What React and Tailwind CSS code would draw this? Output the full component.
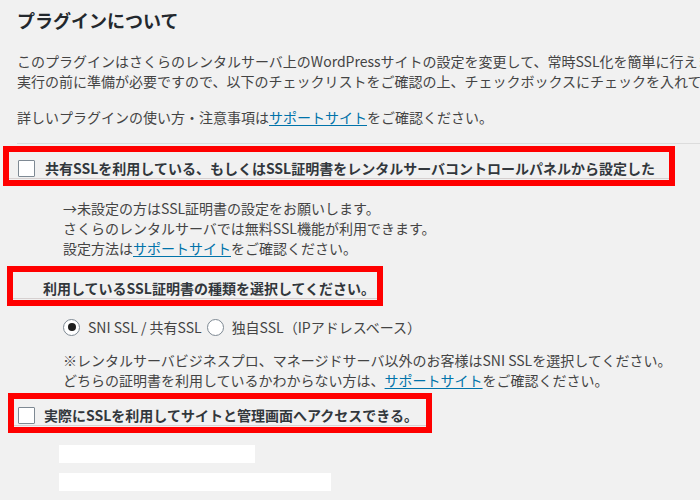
import React from 'react';

const Link = ({ children }) => (
    <span className="text-[#0073aa] underline underline-offset-2">{children}</span>
);

const Checkbox = () => (
    <span className="w-[17px] h-[17px] shrink-0 border border-[#7e8993] bg-white rounded-[1px]" />
);

const Radio = ({ checked }) => (
    <span className="w-[17px] h-[17px] shrink-0 rounded-full border border-[#7e8993] bg-white flex items-center justify-center">
        {checked && <span className="w-[8px] h-[8px] rounded-full bg-[#1e1e1e]" />}
    </span>
);

// red highlight frame drawn over a settings row
const Highlight = ({ className, padLeft, children }) => (
    <div className={`h-[40px] border-[6px] border-[#ff0000] ${className}`}>
        <div className={`h-[27px] border-b border-[#d6d0d0] flex items-center pt-[6px] ${padLeft}`}>
            {children}
        </div>
    </div>
);

export default function App() {
    return (
        <div className="w-[700px] h-[500px] overflow-hidden bg-[#f1f1f1] text-[#444] text-[14px] leading-[20px] whitespace-nowrap font-['Noto_Sans_CJK_JP','Noto_Sans',sans-serif]">
            <h2 className="pt-[8px] pl-[17px] text-[18px] leading-[24px] font-bold text-[#23282d]">
                プラグインについて
            </h2>

            <p className="mt-[19px] pl-[17px]">
                このプラグインはさくらのレンタルサーバ上のWordPressサイトの設定を変更して、常時SSL化を簡単に行えます。
                <br />
                実行の前に準備が必要ですので、以下のチェックリストをご確認の上、チェックボックスにチェックを入れてください。
            </p>
            <p className="mt-[16px] pl-[17px]">
                詳しいプラグインの使い方・注意事項は<Link>サポートサイト</Link>をご確認ください。
            </p>

            <div className="mt-[16px] ml-[17px] h-px bg-[#dcdcdc]" />

            {/* Check 1 */}
            <Highlight className="mt-[2px] ml-[3px] w-[672px]" padLeft="pl-[9px]">
                <Checkbox />
                <span className="ml-[10px] font-bold text-[#32373c]">
                    共有SSLを利用している、もしくはSSL証明書をレンタルサーバコントロールパネルから設定した
                </span>
            </Highlight>
            <div className="mt-[12px] pl-[63px]">
                <div>→未設定の方はSSL証明書の設定をお願いします。</div>
                <div>さくらのレンタルサーバでは無料SSL機能が利用できます。</div>
                <div>
                    設定方法は<Link>サポートサイト</Link>をご確認ください。
                </div>
            </div>

            {/* Check 2 */}
            <Highlight className="mt-[8px] ml-[7px] w-[376px]" padLeft="pl-[30px]">
                <span className="font-bold text-[#32373c]">
                    利用しているSSL証明書の種類を選択してください。
                </span>
            </Highlight>
            <div className="mt-[11px] pl-[63px] flex items-center h-[20px]">
                <Radio checked />
                <span className="ml-[8px]">SNI SSL / 共有SSL</span>
                <span className="ml-[5px]">
                    <Radio />
                </span>
                <span className="ml-[8px]">独自SSL（IPアドレスベース）</span>
            </div>
            <div className="mt-[13px] pl-[63px]">
                <div>※レンタルサーバビジネスプロ、マネージドサーバ以外のお客様はSNI SSLを選択してください。</div>
                <div>
                    どちらの証明書を利用しているかわからない方は、<Link>サポートサイト</Link>をご確認ください。
                </div>
            </div>

            {/* Check 3 */}
            <Highlight className="mt-[3px] ml-[8px] w-[424px]" padLeft="pl-[4px]">
                <Checkbox />
                <span className="ml-[9px] font-bold text-[#32373c]">
                    実際にSSLを利用してサイトと管理画面へアクセスできる。
                </span>
            </Highlight>
            <div className="mt-[12px] pl-[59px] flex flex-col gap-[10px]">
                <div className="w-[196px] h-[18px] bg-white" />
                <div className="w-[272px] h-[18px] bg-white" />
            </div>
        </div>
    );
}
